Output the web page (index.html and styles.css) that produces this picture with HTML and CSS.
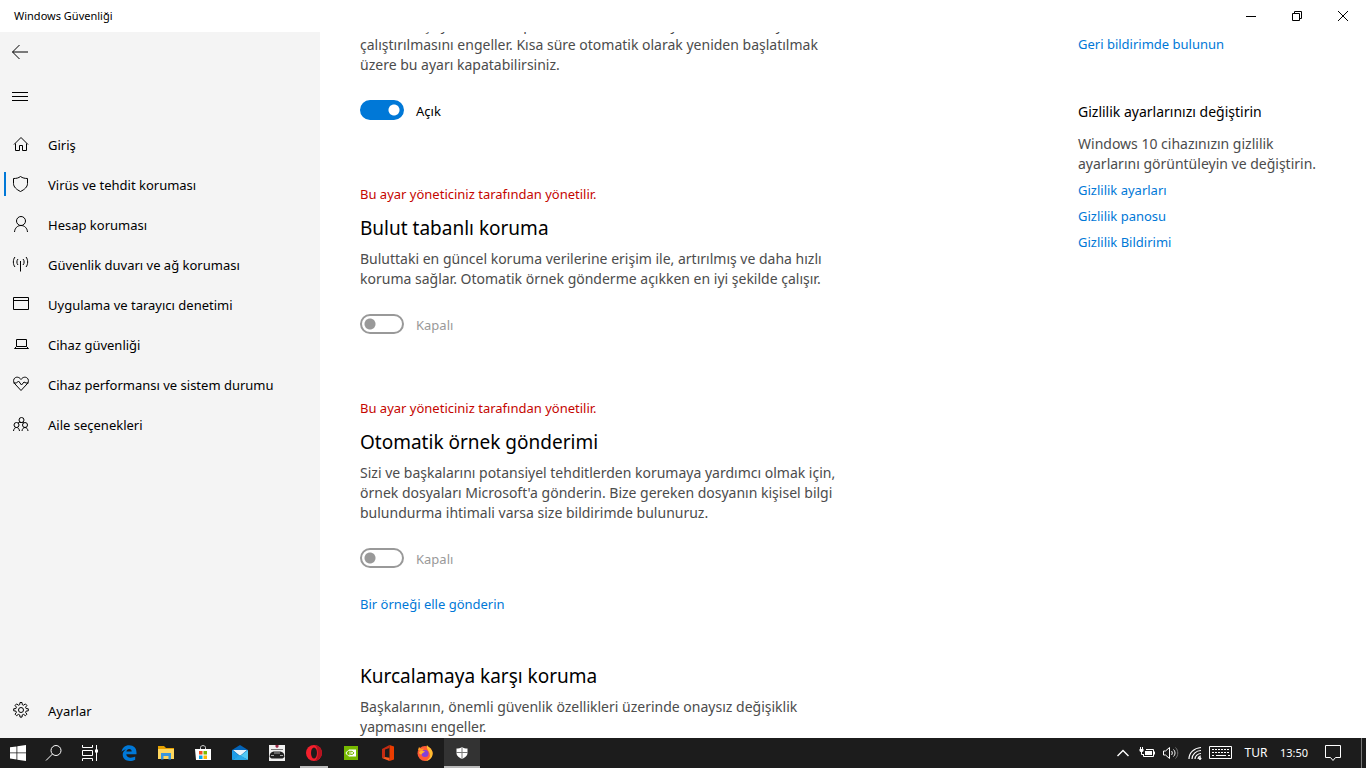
FILE: index.html
```html
<!DOCTYPE html>
<html lang="tr">
<head>
  <meta charset="UTF-8">
  <title>Windows Güvenliği</title>
  <link rel="stylesheet" href="styles.css">
</head>
<body>

<header class="titlebar">
  <span class="title">Windows Güvenliği</span>
  <div class="window-buttons">
    <button aria-label="Simge durumuna küçült">
      <svg width="12" height="12" viewBox="0 0 12 12"><path d="M1 6.5h10"/></svg>
    </button>
    <button aria-label="Önceki boyut">
      <svg width="12" height="12" viewBox="0 0 12 12"><path d="M1.5 3.5h7v7h-7zM3.5 3.5v-2h7v7h-2"/></svg>
    </button>
    <button aria-label="Kapat">
      <svg width="12" height="12" viewBox="0 0 12 12"><path d="M1 1l10 10M11 1L1 11"/></svg>
    </button>
  </div>
</header>

<div class="window">
  <aside class="sidebar">
    <button class="icon-button" aria-label="Geri">
      <svg width="16" height="16" viewBox="0 0 16 16"><path d="M0.5 8H16M7.5 1L0.5 8l7 7"/></svg>
    </button>
    <button class="icon-button menu" aria-label="Menü">
      <svg width="16" height="16" viewBox="0 0 16 16"><path d="M0 4.5h16M0 8.5h16M0 12.5h16"/></svg>
    </button>

    <nav class="nav">
      <a href="#" class="nav-item">
        <svg width="18" height="18" viewBox="0 0 18 18"><path d="M2 9.5L9 2.5l7 7M3.500 8.500v7h4v-5h3v5h4v-7"/></svg>
        Giriş
      </a>
      <a href="#" class="nav-item active">
        <svg width="18" height="18" viewBox="0 0 18 18"><path d="M8.500 1.500c2 1.500 4.500 2 7 2v5c0 3.500-3 6-7 8C4.500 14.500 1.500 12 1.500 8.500v-5c3 0 5-.5 7-2z"/></svg>
        Virüs ve tehdit koruması
      </a>
      <a href="#" class="nav-item">
        <svg width="18" height="18" viewBox="0 0 18 18"><circle cx="9" cy="6" r="4.500"/><path d="M2.500 17c.3-4 3-6.500 6.500-6.500s6.200 2.500 6.500 6.500"/></svg>
        Hesap koruması
      </a>
      <a href="#" class="nav-item">
        <svg width="18" height="18" viewBox="0 0 18 18"><path d="M8.500 6v10.500M6 4c-1.500 1.500-1.500 4.500 0 6M11 4c1.500 1.500 1.500 4.500 0 6M3 2C.8 4.500.8 9.500 3 12M14 2c2.200 2.500 2.200 7.500 0 10"/></svg>
        Güvenlik duvarı ve ağ koruması
      </a>
      <a href="#" class="nav-item">
        <svg width="18" height="18" viewBox="0 0 18 18"><path d="M1.500 2.500h15v12h-15zM1.500 5.500h15"/></svg>
        Uygulama ve tarayıcı denetimi
      </a>
      <a href="#" class="nav-item">
        <svg width="18" height="18" viewBox="0 0 18 18"><path d="M4.500 4.500h10v7h-10zM4.500 11.500l-2 2h14l-2-2"/></svg>
        Cihaz güvenliği
      </a>
      <a href="#" class="nav-item">
        <svg width="18" height="18" viewBox="0 0 18 18"><path d="M9 4.500C7 1.500 3.500 1.500 2 4c-1 2 0 4 1 5l6 6.500L15 9c1-1 2-3 1-5-1.500-2.500-5-2.500-7 .5zM1.500 8h3l2-2 3 4 2.500-3 2 1h2.500"/></svg>
        Cihaz performansı ve sistem durumu
      </a>
      <a href="#" class="nav-item">
        <svg width="18" height="18" viewBox="0 0 18 18"><circle cx="9.500" cy="5" r="2.500"/><circle cx="4.500" cy="10" r="2.500"/><circle cx="13" cy="10" r="2.500"/><path d="M1.500 16c.2-2 1.300-3.500 3-3.500s2.800 1.500 3 3.500M10 16c.2-2 1.300-3.500 3-3.500s2.800 1.500 3 3.500M6 8c.7-.5 2-.8 3-.5 1 0 2-.2 3 .5"/></svg>
        Aile seçenekleri
      </a>
    </nav>

    <a href="#" class="nav-item settings">
      <svg width="18" height="18" viewBox="0 0 18 18"><circle cx="9" cy="9" r="2.500"/><path d="M7.700 3.700L8 1.500h2l.3 2.200 1.300.5 1.800-1.300 1.500 1.500-1.300 1.800.5 1.300 2.200.3v2l-2.200.3-.5 1.300 1.300 1.800-1.500 1.500-1.800-1.300-1.300.5-.3 2.200H8l-.3-2.200-1.300-.5-1.800 1.300-1.500-1.500 1.300-1.800-.5-1.300-2.200-.3v-2l2.200-.3.5-1.300-1.300-1.800 1.500-1.500 1.800 1.300z"/></svg>
      Ayarlar
    </a>
  </aside>

  <main class="content">
    <div class="options">
      <section class="option">
        <p>Kötü amaçlı yazılımı bulup bunların cihazınızda yüklenmesini veya çalıştırılmasını engeller. Kısa süre otomatik olarak yeniden başlatılmak üzere bu ayarı kapatabilirsiniz.</p>
        <label class="toggle"><input type="checkbox" checked> <span>Açık</span></label>
      </section>

      <section class="option">
        <div class="managed">Bu ayar yöneticiniz tarafından yönetilir.</div>
        <h2>Bulut tabanlı koruma</h2>
        <p>Buluttaki en güncel koruma verilerine erişim ile, artırılmış ve daha hızlı koruma sağlar. Otomatik örnek gönderme açıkken en iyi şekilde çalışır.</p>
        <label class="toggle disabled"><input type="checkbox" disabled> <span>Kapalı</span></label>
      </section>

      <section class="option with-link">
        <div class="managed">Bu ayar yöneticiniz tarafından yönetilir.</div>
        <h2>Otomatik örnek gönderimi</h2>
        <p>Sizi ve başkalarını potansiyel tehditlerden korumaya yardımcı olmak için, örnek dosyaları Microsoft'a gönderin. Bize gereken dosyanın kişisel bilgi bulundurma ihtimali varsa size bildirimde bulunuruz.</p>
        <label class="toggle disabled"><input type="checkbox" disabled> <span>Kapalı</span></label>
        <a href="#" class="link">Bir örneği elle gönderin</a>
      </section>

      <section class="option">
        <h2>Kurcalamaya karşı koruma</h2>
        <p>Başkalarının, önemli güvenlik özellikleri üzerinde onaysız değişiklik yapmasını engeller.</p>
      </section>
    </div>

    <div class="related">
      <a href="#" class="link">Geri bildirimde bulunun</a>
      <h3>Gizlilik ayarlarınızı değiştirin</h3>
      <p>Windows 10 cihazınızın gizlilik ayarlarını görüntüleyin ve değiştirin.</p>
      <a href="#" class="link">Gizlilik ayarları</a>
      <a href="#" class="link">Gizlilik panosu</a>
      <a href="#" class="link">Gizlilik Bildirimi</a>
    </div>
  </main>
</div>

<footer class="taskbar">
  <div class="system-buttons">
    <button aria-label="Başlat">
      <svg width="16" height="16" viewBox="0 0 16 16" fill="#fff"><path d="M0 2.300l6.500-.9v6.100H0zM7.300 1.200L16 0v7.500H7.300zM0 8.300h6.500v6.200L0 13.600zM7.300 8.300H16V16l-8.700-1.200z"/></svg>
    </button>
    <button aria-label="Ara">
      <svg class="line" width="18" height="18" viewBox="0 0 18 18"><circle cx="11" cy="6.500" r="5"/><path d="M7.500 10L1 16.500"/></svg>
    </button>
    <button aria-label="Görev görünümü">
      <svg class="line" width="18" height="18" viewBox="0 0 18 18"><path d="M1.500 1v2.500h10V1M1.500 6.500h10v5h-10zM1.500 17v-2.500h10V17M15.500 1v16"/><path d="M14 5.500h3v3h-3z" fill="#fff" stroke="none"/></svg>
    </button>
  </div>

  <div class="apps">
    <button aria-label="Microsoft Edge">
      <svg width="16" height="16" viewBox="0 0 16 16"><path fill="#0078d7" d="M.5 7C1.300 2.600 4 .3 8.100.3c4.700 0 7.400 3.100 7.400 7.200v1.800H5.300c.1 2.300 1.900 3.400 4.400 3.400 1.700 0 3.200-.5 4.500-1.200v3.300c-1.500.8-3.200 1.200-5.300 1.200-4.400 0-7.200-2.500-7.200-6.200 0-2.300 1.200-4.100 3.200-5.200C2.900 4.900 1.300 5.900.5 7zm4.900-.4h5.300c0-1.700-.8-2.700-2.500-2.700-1.500 0-2.500 1.100-2.800 2.700z"/></svg>
    </button>
    <button aria-label="Dosya Gezgini">
      <svg width="16" height="16" viewBox="0 0 16 16"><path fill="#e5a000" d="M0 1h6l2 2h8v4H0z"/><path fill="#ffd75e" d="M0 4h16v10H0z"/><path fill="#3a96dd" d="M3 8h10v6.500h-2.500V11h-5v3.500H3z"/></svg>
    </button>
    <button aria-label="Microsoft Store">
      <svg width="16" height="16" viewBox="0 0 16 16"><path fill="none" stroke="#ddd" d="M5.500 5V2.500c0-2.500 5-2.500 5 0V5"/><path fill="#fff" d="M0 4h16v11H1z"/><path fill="#f25022" d="M4 6h3.500v3.500H4z"/><path fill="#7fba00" d="M8.500 6H12v3.500H8.500z"/><path fill="#00a4ef" d="M4 10.500h3.500V14H4z"/><path fill="#ffb900" d="M8.500 10.500H12V14H8.500z"/></svg>
    </button>
    <button aria-label="Posta">
      <svg width="16" height="16" viewBox="0 0 16 16"><path fill="#0364b8" d="M0 5l8-5 8 5v4H0z"/><path fill="#e8f4fc" d="M1 5h14l-7 6z"/><path fill="#1e9de8" d="M0 5l8 6-8 4z"/><path fill="#50c8f5" d="M16 5l-8 6 8 4z"/><path fill="#28a8ea" d="M0 15l8-5 8 5z"/></svg>
    </button>
    <button aria-label="Oyun">
      <svg width="16" height="16" viewBox="0 0 16 16"><path fill="#f0f0f0" d="M0 0h16v16H0z"/><path fill="#9c2745" d="M6.500 0h3v2L8 3 6.500 2z"/><path fill="#777" d="M2 4h12v1H2z"/><path fill="#222" d="M1 9c1-2 3-2.500 5-2.500h4c2 0 4 .5 5 2.500l.5 3-2 1.500h-11l-2-1.500z"/><path fill="#aaa" d="M5 7.500h6v1H5zM2 10h3v1H2zM11 10h3v1h-3z"/></svg>
    </button>
    <button class="running" aria-label="Opera">
      <svg width="16" height="16" viewBox="0 0 16 16"><circle cx="8" cy="8" r="8" fill="#f4202d"/><path fill="#b5121f" d="M8 0c11 .5 10 15.500 0 16 5-1 5-15 0-16z"/><ellipse cx="8" cy="8" rx="3" ry="5.500" fill="#1c1c1c"/></svg>
    </button>
    <button aria-label="NVIDIA">
      <svg width="14" height="14" viewBox="0 0 14 14"><path fill="#76b900" d="M0 0h14v14H0z"/><path fill="#fff" d="M5.500 3.500H12v7H5.500z"/><path fill="none" stroke="#fff" d="M6 4C4 4.200 3 5.500 2 7c1 2 2.300 3 4 3"/><path fill="none" stroke="#76b900" d="M5.500 5.500c2-.7 3.500 0 4.500 1.500-1 1.500-3 2-4.500 1M6 7h1.500"/></svg>
    </button>
    <button aria-label="Office">
      <svg width="14" height="16" viewBox="0 0 14 16"><path fill="#eb3c00" d="M8.500 0L13 1.500v13L8.500 16z"/><path fill="#c62b12" d="M1 4l7.500-4v3L4 4.500V12L1 13z"/><path fill="#ff5a1f" d="M1 13l3-1 4.500.8V16z"/></svg>
    </button>
    <button aria-label="Firefox">
      <svg width="16" height="16" viewBox="0 0 16 16"><circle cx="8" cy="8.500" r="7.500" fill="#ff5a36"/><path fill="#ffbd30" d="M10 0c1 2 4.500 3 5.500 7 1 5-3 9-7.500 9 5-2 6-5 4-9-1-2-3-4-2-7z"/><path fill="#ff9a25" d="M1 5l1-3 2 2 3-.5-2 3z"/><circle cx="8" cy="8.500" r="3.500" fill="#8340d8"/><path fill="#ffb22c" d="M2 7c2-2 4-1.500 6-.5-1 1.500-3 1-3 2.500-1 1-3 0-3-2z"/></svg>
    </button>
    <button class="running current" aria-label="Windows Güvenliği">
      <svg width="14" height="14" viewBox="0 0 14 14"><path fill="#fff" d="M7 1c1.500 1 3.500 1.500 5.500 1.500V7c0 3-2.500 4.500-5.500 6C4 11.500 1.500 10 1.500 7V2.500C3.500 2.500 5.500 2 7 1z"/><path stroke="#777" d="M7 1v12M1 6.500h12"/></svg>
    </button>
  </div>

  <div class="tray">
    <button class="tray-icon" aria-label="Gizli simgeleri göster">
      <svg class="line" width="12" height="12" viewBox="0 0 12 12"><path d="M0.500 9L6 3.500 11.500 9" stroke-width="1.400"/></svg>
    </button>
    <button class="tray-icon" aria-label="Pil">
      <svg class="line" width="16" height="14" viewBox="0 0 16 14"><path d="M7 3.500h7.500v7h-10V8M15.500 5.500v3M1.500 1v2M3.500 1v2M2.500 6v2.500h2"/><path d="M.5 3h4v2l-1 1h-2l-1-1z" fill="#fff" stroke="none"/><path d="M6 5h7v4H6z" fill="#fff" stroke="none"/></svg>
    </button>
    <button class="tray-icon" aria-label="Ses">
      <svg class="line" width="16" height="14" viewBox="0 0 16 14"><path d="M.5 5h2L6.500 1.500v11L2.500 9h-2zM8.500 5c1 1 1 3 0 4M10.500 3.500c2 2 2 5 0 7"/><path d="M12.500 1.500c3 3 3 8 0 11" stroke="#777"/></svg>
    </button>
    <button class="tray-icon" aria-label="Ağ">
      <svg class="line" width="14" height="14" viewBox="0 0 14 14"><path d="M1 13C1 7 6 2 13 1.500M4 13c0-4.500 4-8.500 9-8.500M7 13c0-3 3-5.500 6-5.500M10 13c0-1.500 1.500-3 3-3" stroke-width="1.200"/><circle cx="12" cy="12.500" r="1" fill="#fff"/></svg>
    </button>
    <button class="tray-icon keyboard" aria-label="Dokunmatik klavye">
      <svg class="line" width="24" height="14" viewBox="0 0 24 14"><path d="M.5.500h22v12H.5z"/><path d="M3 3.500h18M3 6.500h18" stroke-dasharray="2 1"/><path d="M3 9.500h2M7 9.500h10M19 9.500h2"/></svg>
    </button>
    <button class="language">TUR</button>
    <button class="clock">13:50</button>
    <button class="notifications" aria-label="Bildirimler">
      <svg class="line" width="16" height="16" viewBox="0 0 16 16"><path d="M.5.500h15v12h-5l-2.500 3-2.500-3h-5z"/></svg>
    </button>
    <button class="show-desktop" aria-label="Masaüstünü göster"></button>
  </div>
</footer>

</body>
</html>
```
FILE: styles.css
```css
* {
  box-sizing: border-box;
}
body {
  font-family: "Segoe UI", "Noto Sans", "Open Sans", sans-serif;
  font-size: 13px;
  line-height: 20px;
  display: flex;
  flex-direction: column;
  height: 100vh;
  margin: 0;
  background-color: #ffffff;
  color: #000000;
}
button {
  display: flex;
  align-items: center;
  justify-content: center;
  padding: 0;
  border: none;
  background: none;
  font: inherit;
  color: inherit;
}
h2, h3, p {
  margin: 0;
  font-weight: normal;
}

/* Title bar */
.titlebar {
  display: flex;
  justify-content: space-between;
  height: 32px;
  flex: none;
}
.title {
  padding-left: 14px;
  font-size: 11px;
  line-height: 32px;
}
.window-buttons {
  display: flex;
}
.window-buttons button {
  width: 46px;
}
.window-buttons svg,
.sidebar svg {
  fill: none;
  stroke: #000000;
}

/* Window body */
.window {
  display: flex;
  flex: 1;
  min-height: 0;
}
.sidebar {
  display: flex;
  flex-direction: column;
  width: 320px;
  flex: none;
  background-color: #f4f4f4;
}
.icon-button {
  width: 40px;
  height: 40px;
}
.icon-button.menu {
  margin: 4px 0 9px;
}
.nav {
  flex: 1;
}
.nav-item {
  display: flex;
  align-items: center;
  gap: 18px;
  height: 40px;
  padding-left: 12px;
  color: #000000;
  text-decoration: none;
}
.nav-item svg {
  margin-bottom: 2px;
}
.nav-item.active {
  background: linear-gradient(#0078d7, #0078d7) 4px 7px / 2px 24px no-repeat;
}
.settings {
  margin-bottom: 7px;
}

/* Scrolled content */
.content {
  display: flex;
  justify-content: space-between;
  flex: 1;
  padding: 0 40px;
  overflow: hidden;
}
.options {
  width: 484px;
  margin-top: -17px;
}
.option {
  margin-bottom: 64px;
}
.option.with-link {
  margin-bottom: 50px;
}
.option p,
.related p {
  font-size: 14px;
  color: #4c4c4c;
}
.option h2 {
  font-size: 19px;
  line-height: 24px;
  margin-bottom: 9px;
}
.managed {
  color: #c50500;
  margin-bottom: 12px;
}
.toggle {
  display: flex;
  align-items: center;
  gap: 12px;
  height: 20px;
  margin-top: 25px;
}
.toggle span {
  padding-top: 2px;
}
.toggle input {
  appearance: none;
  width: 44px;
  height: 20px;
  margin: 0;
  border: 2px solid #999999;
  border-radius: 10px;
  background: radial-gradient(circle at 8px 8px, #999999 5px, transparent 6px);
}
.toggle input:checked {
  border-color: #0078d7;
  background: radial-gradient(circle at 32px 8px, #ffffff 5px, #0078d7 6px);
}
.toggle.disabled {
  color: #999999;
}
.link {
  display: block;
  color: #0078d7;
  text-decoration: none;
}
.toggle + .link {
  margin-top: 26px;
}
.related {
  width: 248px;
  padding-top: 2px;
}
.related h3 {
  font-size: 14px;
  margin: 48px 0 12px;
}
.related p + .link,
.related .link + .link {
  margin-top: 6px;
}

/* Taskbar */
.taskbar {
  display: flex;
  height: 30px;
  flex: none;
  background-color: #1c1c1c;
  color: #ffffff;
  font-size: 12px;
}
.system-buttons,
.apps,
.tray {
  display: flex;
}
.system-buttons button,
.apps button {
  width: 36px;
}
.apps {
  gap: 1px;
  margin-left: 3px;
}
.running {
  background: linear-gradient(#bbbbbb, #bbbbbb) center bottom / 28px 2px no-repeat;
}
.running.current {
  background-color: #333333;
  background-size: 36px 2px;
}
.line {
  fill: none;
  stroke: #ffffff;
}
.tray {
  margin-left: auto;
}
.tray-icon {
  width: 24px;
}
.tray-icon.keyboard {
  width: 28px;
}
.language {
  width: 42px;
}
.clock {
  width: 34px;
  font-size: 11px;
}
.notifications {
  width: 44px;
  margin-right: 6px;
}
.show-desktop {
  width: 5px;
  border-left: 1px solid #777777;
}
```
